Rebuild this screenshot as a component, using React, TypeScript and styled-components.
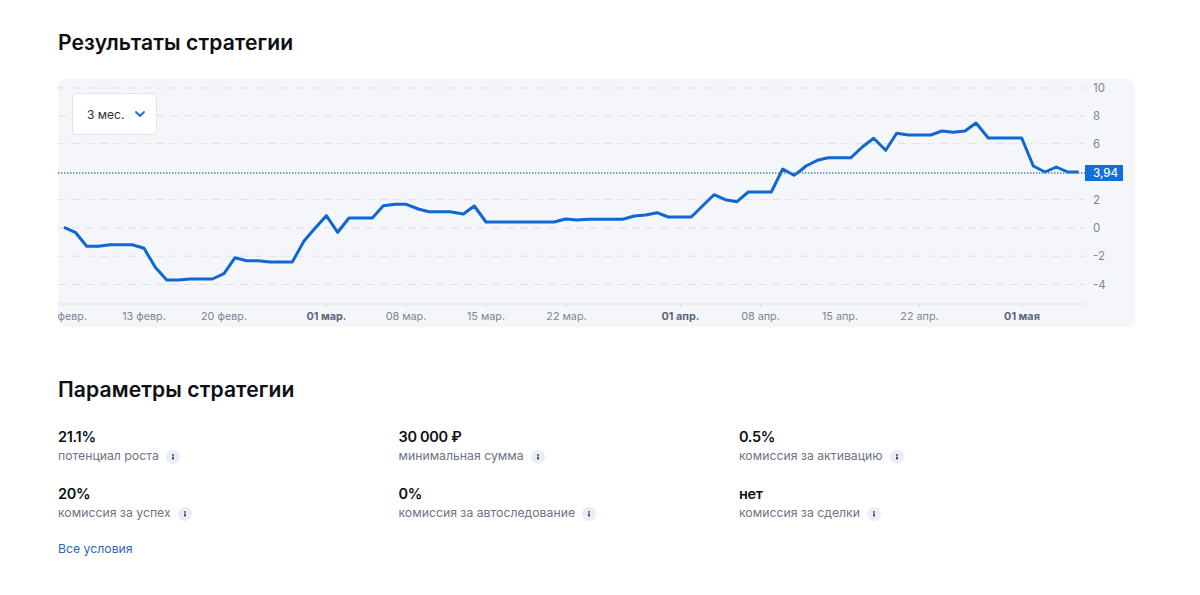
import React from "react";
import styled, { createGlobalStyle } from "styled-components";

const Global = createGlobalStyle`
  html, body { margin: 0; padding: 0; background: #fff; }
  body { font-family: Inter, "Noto Sans", "Liberation Sans", sans-serif; color: #0d0f14; }
`;

const Page = styled.main`
  width: 1200px;
  height: 595px;
  box-sizing: border-box;
  padding: 29px 65px 0 58px;
  overflow: hidden;
`;

const Heading = styled.h2`
  margin: 0;
  font-size: 21.1px;
  line-height: 28px;
  font-weight: 600;
  letter-spacing: 0.1px;
  color: #0d0f14;
`;

const ChartPanel = styled.section`
  position: relative;
  margin: 22px 0 49px;
  height: 248px;
  border-radius: 8px;
  background: #f5f6fa;
  overflow: hidden;
`;

const ChartSvg = styled.svg`
  display: block;
  width: 1077px;
  height: 248px;
`;

const PeriodSelect = styled.button`
  position: absolute;
  left: 14px;
  top: 14px;
  width: 85px;
  height: 42px;
  box-sizing: border-box;
  display: flex;
  align-items: center;
  gap: 10px;
  padding: 0 0 0 14px;
  background: #fff;
  border: 1px solid #dfe4ee;
  border-radius: 4px;
  font: 400 12px Inter, "Noto Sans", sans-serif;
  color: #2b2f38;
`;

const Params = styled.div`
  display: grid;
  grid-template-columns: repeat(3, 340.5px);
  row-gap: 17px;
  margin-top: 23px;
`;

const Param = styled.div`
  display: flex;
  flex-direction: column;
  height: 40px;
`;

const Value = styled.div`
  font-size: 14.5px;
  line-height: 20px;
  font-weight: 600;
  letter-spacing: -0.3px;
  color: #0d0f14;
`;

const LabelRow = styled.div`
  display: flex;
  align-items: center;
  gap: 7px;
  font-size: 12.25px;
  line-height: 18px;
  color: #6d7586;
`;

const InfoDot = styled.span`
  display: inline-flex;
  align-items: center;
  justify-content: center;
  width: 14px;
  height: 14px;
  margin-top: 2px;
  border-radius: 50%;
  background: #e8edf6;
`;

const AllTerms = styled.a`
  display: block;
  margin-top: 16px;
  font-size: 12.25px;
  line-height: 18px;
  color: #2f67b8;
  text-decoration: none;
`;

const line: [number, number][] = [
  [64,227.3],[75.3,232.3],[86.7,246.3],[98.3,246.3],[110,244.7],[132.3,244.7],[144,248.3],[155.3,267.3],[166.7,280],[178.3,280],[190,279],[212.3,279],[224,273.7],[235,257.7],[246.7,260.7],[258.3,260.7],[270,262],[292.3,262],[304,241],[315,228.3],[326.3,215.7],[337.7,232.3],[349,218],[372.3,218],[383.3,205.7],[395,204.3],[406.3,204.3],[418.3,209],[429,211.7],[450,211.7],[463.3,214],[474.3,206],[486,222],[554,222],[565.7,219],[576.7,220],[588.3,219.3],[622.7,219.3],[634.3,216],[645.7,215],[657,212.7],[668.3,217],[691.3,217],[702.7,205.7],[714,194.7],[725.3,199.7],[737,201.7],[748.3,192],[771.3,192],[782.7,169],[794,175.3],[800,171],[806,166],[817.3,160.3],[828.3,157.7],[851,157.7],[862.3,147],[873.7,138.3],[885.7,150.3],[896.7,133.3],[908.3,135],[930.7,135],[942,131],[953.3,132.3],[965,131],[976,123],[988.3,138],[1021.7,138],[1033.3,166],[1045,172],[1056.3,167],[1067.7,172],[1078.7,172],
];

const gridLines: { y: number; label: string }[] = [
  { y: 88, label: "10" },
  { y: 115.7, label: "8" },
  { y: 143.7, label: "6" },
  { y: 199.7, label: "2" },
  { y: 227.9, label: "0" },
  { y: 256.2, label: "-2" },
  { y: 284.5, label: "-4" },
];

const ticks: { x: number; label: string; bold?: boolean }[] = [
  { x: 64, label: "06 февр." },
  { x: 144, label: "13 февр." },
  { x: 224, label: "20 февр." },
  { x: 326.5, label: "01 мар.", bold: true },
  { x: 406, label: "08 мар." },
  { x: 486, label: "15 мар." },
  { x: 566.5, label: "22 мар." },
  { x: 680.5, label: "01 апр.", bold: true },
  { x: 760.5, label: "08 апр." },
  { x: 840, label: "15 апр." },
  { x: 919.5, label: "22 апр." },
  { x: 1022, label: "01 мая", bold: true },
];

const Chart = () => (
  <ChartSvg viewBox="58 79 1077 248" fontFamily="Inter, 'Noto Sans', sans-serif">
    {gridLines.map((g) => (
      <g key={g.label}>
        <line x1={58} x2={1085} y1={g.y} y2={g.y} stroke="#dcdfe6" strokeDasharray="8 6" />
        <text x={1093} y={g.y + 4.2} fontSize={11.5} fill="#7d8696">{g.label}</text>
      </g>
    ))}
    <line x1={58} x2={1085} y1={304} y2={304} stroke="#dbe0ea" />
    {ticks.map((t) => (
      <g key={t.label}>
        <line x1={t.x} x2={t.x} y1={304} y2={308} stroke="#dbe0ea" />
        <text
          x={t.x}
          y={320}
          textAnchor="middle"
          fontSize={10.8}
          fontWeight={t.bold ? 700 : 400}
          fill={t.bold ? "#5d6779" : "#7d8696"}
        >
          {t.label}
        </text>
      </g>
    ))}
    <polyline
      points={line.map((p) => p.join(",")).join(" ")}
      fill="none"
      stroke="#0f67d2"
      strokeWidth={3}
      strokeLinejoin="round"
    />
    <line x1={58} x2={1085} y1={173} y2={173} stroke="#4a83a3" strokeWidth={1.3} strokeDasharray="1.4 1.6" />
    <rect x={1085} y={165} width={38} height={16} fill="#0f6fde" />
    <text x={1093} y={177.2} fontSize={11.5} fontWeight={500} fill="#fff">3,94</text>
  </ChartSvg>
);

const Chevron = () => (
  <svg width="12" height="12" viewBox="0 0 12 12" fill="none">
    <path d="M2 4l4 4 4-4" stroke="#1f6fc4" strokeWidth="1.8" strokeLinecap="round" strokeLinejoin="round" />
  </svg>
);

const InfoIcon = () => (
  <InfoDot>
    <svg width="4" height="6" viewBox="0 0 4 6">
      <circle cx="2" cy="1" r="0.9" fill="#3a4354" />
      <rect x="1.1" y="2.6" width="1.8" height="3" rx="0.7" fill="#3a4354" />
    </svg>
  </InfoDot>
);

const params = [
  { value: "21.1%", label: "потенциал роста" },
  { value: "30 000 ₽", label: "минимальная сумма" },
  { value: "0.5%", label: "комиссия за активацию" },
  { value: "20%", label: "комиссия за успех" },
  { value: "0%", label: "комиссия за автоследование" },
  { value: "нет", label: "комиссия за сделки" },
];

export default function App() {
  return (
    <Page>
      <Global />
      <Heading>Результаты стратегии</Heading>
      <ChartPanel>
        <Chart />
        <PeriodSelect>
          3 мес.
          <Chevron />
        </PeriodSelect>
      </ChartPanel>
      <Heading>Параметры стратегии</Heading>
      <Params>
        {params.map((p) => (
          <Param key={p.label}>
            <Value>{p.value}</Value>
            <LabelRow>
              {p.label}
              <InfoIcon />
            </LabelRow>
          </Param>
        ))}
      </Params>
      <AllTerms href="#">Все условия</AllTerms>
    </Page>
  );
}
